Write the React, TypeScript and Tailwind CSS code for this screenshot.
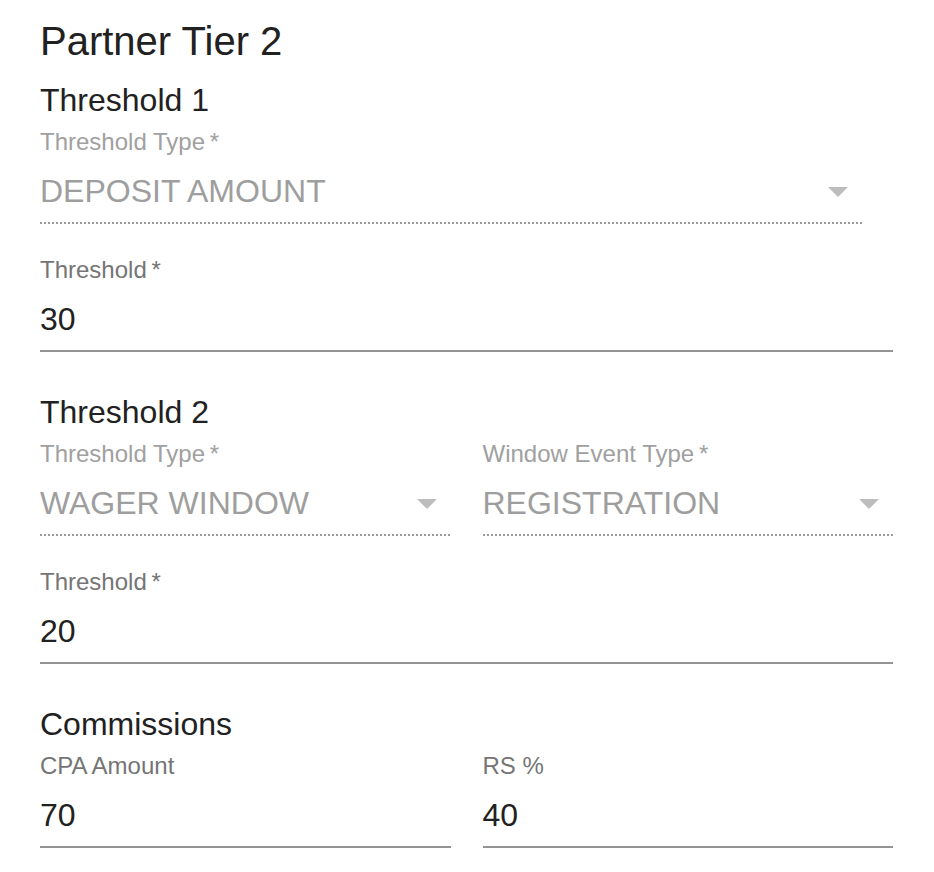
import type { ReactNode } from 'react';

interface FieldProps {
  label: string;
  value: string;
  required?: boolean;
}

function Heading({ children }: { children: ReactNode }) {
  return <h3 className="text-[32px] leading-[40px] text-[#212121]">{children}</h3>;
}

function Label({ text, required, disabled }: { text: string; required?: boolean; disabled?: boolean }) {
  return (
    <div className={`h-8 text-[24px] leading-8 ${disabled ? 'text-[#a0a0a0]' : 'text-[#757575]'}`}>
      {text}
      {required && <span>&thinsp;*</span>}
    </div>
  );
}

// Disabled dropdown: grey value, dotted underline, arrow on the right
function SelectField({ label, value, required = true }: FieldProps) {
  return (
    <div>
      <Label text={label} required={required} disabled />
      <div className="relative pt-[9px] pb-[7px]">
        <div className="h-12 text-[32px] leading-[48px] text-[#9e9e9e]">{value}</div>
        <svg
          className="absolute right-0 top-[9px] h-12 w-12"
          viewBox="0 0 24 24"
          fill="#bdbdbd"
        >
          <path d="M7 10l5 5 5-5z" />
        </svg>
      </div>
      <div className="h-0.5 bg-[image:linear-gradient(to_right,#9a9a9a_50%,transparent_50%)] bg-[length:4px_2px] bg-repeat-x" />
    </div>
  );
}

function TextField({ label, value, required }: FieldProps) {
  return (
    <div>
      <Label text={label} required={required} />
      <div className="pt-[9px] pb-[7px] border-b-2 border-[#949494]">
        <div className="h-12 text-[32px] leading-[48px] text-[#212121]">{value}</div>
      </div>
    </div>
  );
}

export default function App() {
  return (
    <div className="min-h-screen bg-white [font-family:'Liberation_Sans',Arial,sans-serif]">
      <div className="ml-10 w-[853px] pt-[17px] pb-6">
        <h2 className="text-[40px] leading-[48px] text-[#212121]">Partner Tier 2</h2>

        {/* Threshold 1 */}
        <section className="mt-[15px]">
          <Heading>Threshold 1</Heading>
          <div className="mt-1.5 w-[822px]">
            <SelectField label="Threshold Type" value="DEPOSIT AMOUNT" />
          </div>
          <div className="mt-[30px]">
            <TextField label="Threshold" value="30" required />
          </div>
        </section>

        {/* Threshold 2 */}
        <section className="mt-10">
          <Heading>Threshold 2</Heading>
          <div className="mt-1.5 grid grid-cols-2 gap-x-8">
            <SelectField label="Threshold Type" value="WAGER WINDOW" />
            <SelectField label="Window Event Type" value="REGISTRATION" />
          </div>
          <div className="mt-[30px]">
            <TextField label="Threshold" value="20" required />
          </div>
        </section>

        {/* Commissions */}
        <section className="mt-10">
          <Heading>Commissions</Heading>
          <div className="mt-1.5 grid grid-cols-2 gap-x-8">
            <TextField label="CPA Amount" value="70" />
            <TextField label="RS %" value="40" />
          </div>
        </section>
      </div>
    </div>
  );
}
